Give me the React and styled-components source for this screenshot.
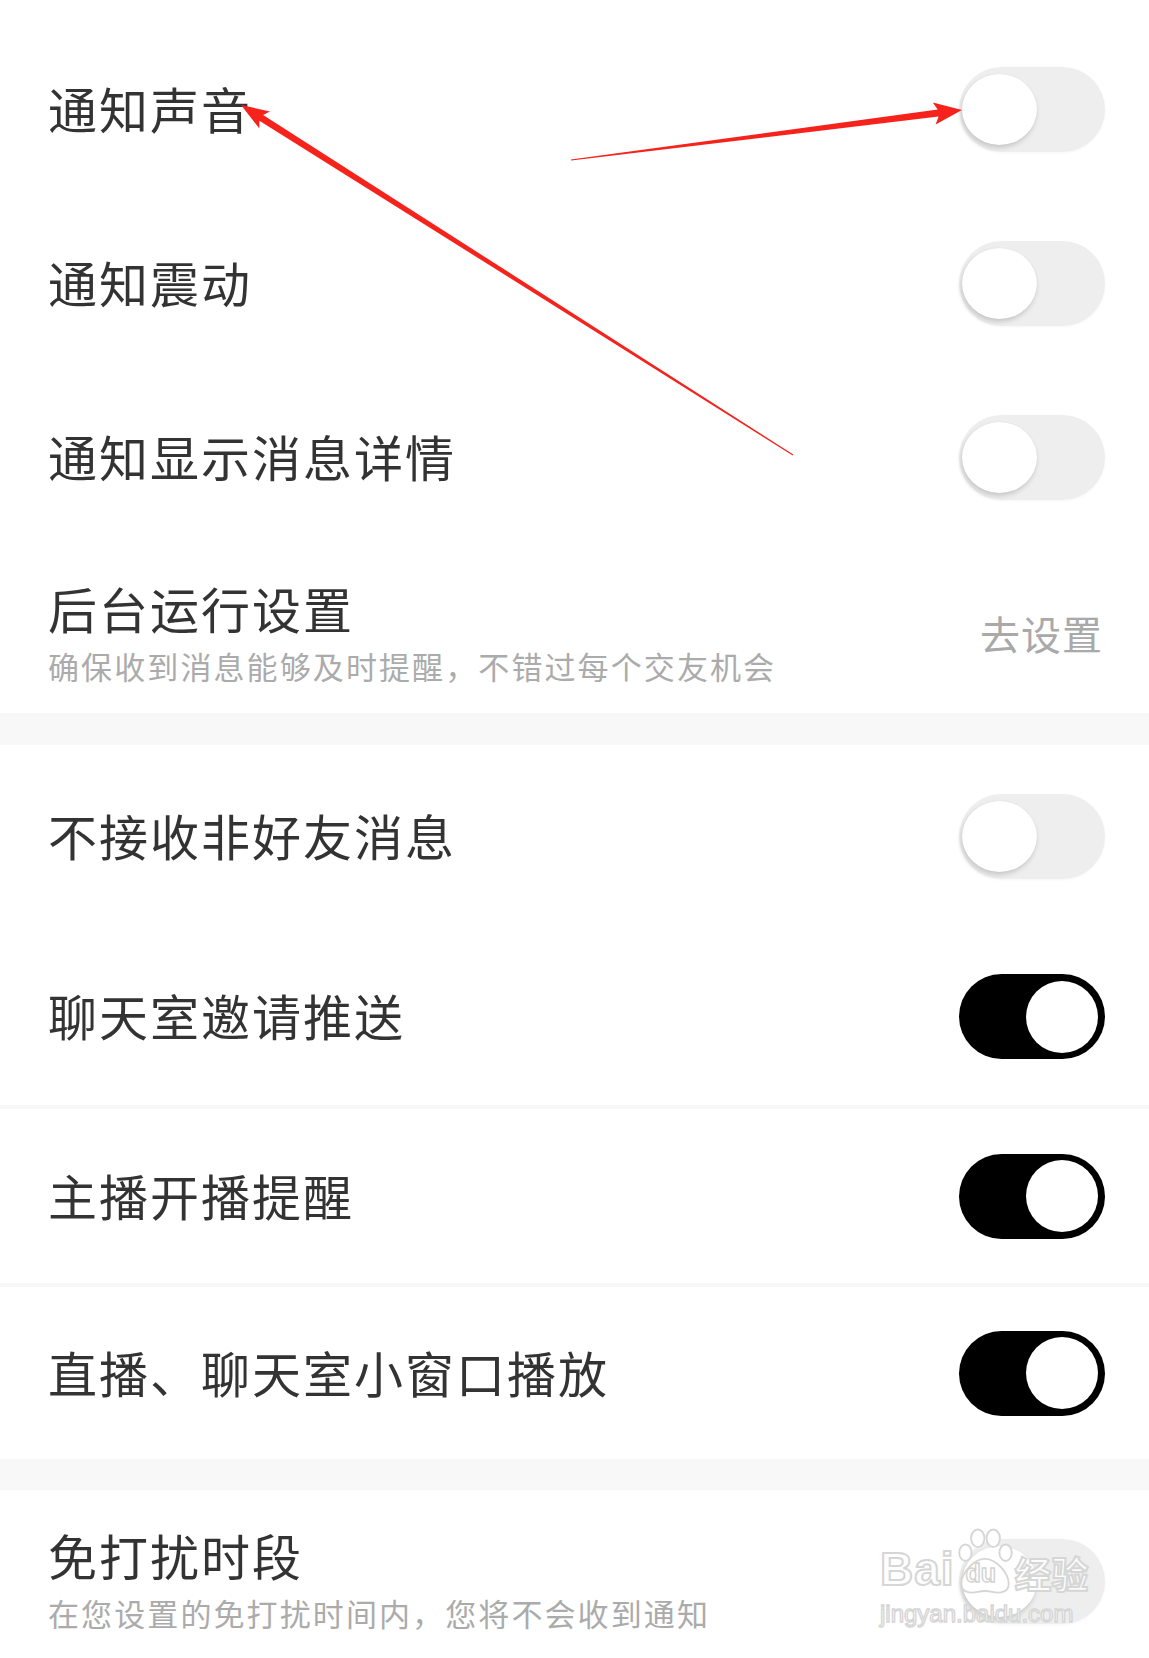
import React from "react";
import styled, { createGlobalStyle } from "styled-components";

const Global = createGlobalStyle`
  html, body {
    margin: 0;
    padding: 0;
    background: #fff;
  }
  body {
    font-family: "Noto Sans CJK SC", "Noto Sans", sans-serif;
  }
`;

const Page = styled.div`
  position: relative;
  width: 1149px;
  height: 1658px;
  overflow: hidden;
  background: #fff;
`;

const Section = styled.div`
  display: flex;
  flex-direction: column;
  padding-top: ${(p) => p.$pt || 0}px;
`;

const Band = styled.div`
  height: ${(p) => p.$h}px;
  background: #f8f8f8;
`;

const Divider = styled.div`
  height: 4px;
  background: #f7f7f7;
`;

const Row = styled.div`
  display: flex;
  align-items: center;
  justify-content: space-between;
  box-sizing: border-box;
  height: ${(p) => p.$h}px;
  padding: ${(p) => p.$pt || 0}px 44px 0 48px;
`;

const TextBlock = styled.div`
  display: flex;
  flex-direction: column;
  gap: 10px;
`;

const Title = styled.div`
  font-size: 49px;
  line-height: 56px;
  letter-spacing: 2px;
  color: #333;
  margin-top: -3px;
`;

const Sub = styled.div`
  font-size: 31px;
  line-height: 40px;
  letter-spacing: 2.1px;
  color: #ababab;
`;

const Action = styled.div`
  font-size: 40px;
  line-height: 48px;
  letter-spacing: 1px;
  color: #a9a9a9;
  margin-right: 2px;
  margin-bottom: 4px;
`;

const Track = styled.div`
  display: flex;
  align-items: center;
  justify-content: ${(p) => (p.$on ? "flex-end" : "flex-start")};
  box-sizing: border-box;
  width: 146px;
  height: 85px;
  border-radius: 43px;
  padding: ${(p) => (p.$on ? "0 7px" : "0 3px")};
  background: ${(p) => (p.$on ? "#000" : "#eeeeee")};
  box-shadow: ${(p) => (p.$on ? "none" : "0 1px 3px rgba(0,0,0,0.04)")};
`;

const Knob = styled.div`
  width: ${(p) => (p.$on ? 72 : 75)}px;
  height: ${(p) => (p.$on ? 72 : 71)}px;
  border-radius: 50%;
  background: #fff;
  box-shadow: ${(p) =>
    p.$on ? "none" : "-1px 3px 5px rgba(0,0,0,0.16), 0 0 1px rgba(0,0,0,0.08)"};
`;

const Overlay = styled.svg`
  position: absolute;
  left: 0;
  top: 0;
  pointer-events: none;
`;

const Watermark = styled.div`
  position: absolute;
  left: 880px;
  top: 1528px;
  width: 214px;
  display: flex;
  flex-direction: column;
  align-items: flex-start;
  pointer-events: none;
`;

const MarkTop = styled.div`
  display: flex;
  align-items: flex-end;
`;

const MarkWord = styled.span`
  font-family: ${(p) => (p.$cjk ? '"Noto Sans CJK SC", sans-serif' : '"Liberation Sans", sans-serif')};
  font-weight: 700;
  font-size: ${(p) => p.$size}px;
  line-height: 1;
  color: rgba(255, 255, 255, 0.85);
  -webkit-text-stroke: 2px #d6d6d6;
  letter-spacing: ${(p) => p.$ls || 0}px;
`;

const Paw = styled.div`
  position: relative;
  width: 56px;
  height: 68px;
  margin: 0 2px -4px;
`;

const PawText = styled.span`
  position: absolute;
  left: 9px;
  bottom: 10px;
  font-family: "Liberation Sans", sans-serif;
  font-weight: 700;
  font-size: 25px;
  line-height: 1;
  color: rgba(255, 255, 255, 0.85);
  -webkit-text-stroke: 1.4px #d2d2d2;
`;

const MarkUrl = styled.span`
  font-family: "Liberation Sans", sans-serif;
  font-size: 24px;
  line-height: 1;
  margin-top: 10px;
  color: rgba(255, 255, 255, 0.85);
  -webkit-text-stroke: 1.4px #d6d6d6;
`;

function Toggle({ on }) {
  return (
    <Track $on={on}>
      <Knob $on={on} />
    </Track>
  );
}

function arrowPoints(tail, tip, w0, w1, headLen, headHalf) {
  const dx = tip[0] - tail[0];
  const dy = tip[1] - tail[1];
  const len = Math.hypot(dx, dy);
  const ux = dx / len;
  const uy = dy / len;
  const nx = -uy;
  const ny = ux;
  const bx = tip[0] - ux * headLen;
  const by = tip[1] - uy * headLen;
  const pts = [
    [tail[0] + (nx * w0) / 2, tail[1] + (ny * w0) / 2],
    [bx + (nx * w1) / 2, by + (ny * w1) / 2],
    [bx + nx * headHalf - ux * 4, by + ny * headHalf - uy * 4],
    tip,
    [bx - nx * headHalf - ux * 4, by - ny * headHalf - uy * 4],
    [bx - (nx * w1) / 2, by - (ny * w1) / 2],
    [tail[0] - (nx * w0) / 2, tail[1] - (ny * w0) / 2],
  ];
  return pts.map((p) => p.map((v) => v.toFixed(1)).join(",")).join(" ");
}

const simpleRows = [
  { label: "通知声音", on: false },
  { label: "通知震动", on: false },
  { label: "通知显示消息详情", on: false },
];

export default function App() {
  return (
    <>
      <Global />
      <Page>
        <Section $pt={22}>
          {simpleRows.map((r) => (
            <Row key={r.label} $h={174}>
              <Title>{r.label}</Title>
              <Toggle on={r.on} />
            </Row>
          ))}
          <Row $h={169} $pt={12}>
            <TextBlock>
              <Title>后台运行设置</Title>
              <Sub>确保收到消息能够及时提醒，不错过每个交友机会</Sub>
            </TextBlock>
            <Action>去设置</Action>
          </Row>
        </Section>

        <Band $h={32} />

        <Section>
          <Row $h={183}>
            <Title>不接收非好友消息</Title>
            <Toggle on={false} />
          </Row>
          <Row $h={177}>
            <Title>聊天室邀请推送</Title>
            <Toggle on />
          </Row>
          <Divider />
          <Row $h={174}>
            <Title>主播开播提醒</Title>
            <Toggle on />
          </Row>
          <Divider />
          <Row $h={172}>
            <Title>直播、聊天室小窗口播放</Title>
            <Toggle on />
          </Row>
        </Section>

        <Band $h={31} />

        <Section>
          <Row $h={182}>
            <TextBlock>
              <Title>免打扰时段</Title>
              <Sub>在您设置的免打扰时间内，您将不会收到通知</Sub>
            </TextBlock>
            <Toggle on={false} />
          </Row>
        </Section>

        <Overlay width="1149" height="1658" viewBox="0 0 1149 1658">
          <polygon
            fill="#f5231c"
            points={arrowPoints([571, 160], [962, 110], 1, 7, 24, 11)}
          />
          <polygon
            fill="#f5231c"
            points={arrowPoints([793, 455], [241, 105], 1, 7, 24, 10)}
          />
        </Overlay>

        <Watermark>
          <MarkTop>
            <MarkWord $size={46} $ls={1}>Bai</MarkWord>
            <Paw>
              <svg width="56" height="68" viewBox="0 0 54 66">
                <g fill="rgba(255,255,255,0.85)" stroke="#d6d6d6" strokeWidth="1.8">
                  <ellipse cx="8" cy="24" rx="6" ry="8" />
                  <ellipse cx="20" cy="10" rx="6.5" ry="8.5" />
                  <ellipse cx="35" cy="10" rx="6.5" ry="8.5" />
                  <ellipse cx="47" cy="24" rx="6" ry="8" />
                  <path d="M27 30 C 16 30, 4 44, 4 54 C 4 62, 12 64, 20 62 C 24 61, 30 61, 34 62 C 42 64, 50 62, 50 54 C 50 44, 38 30, 27 30 Z" />
                </g>
              </svg>
              <PawText>du</PawText>
            </Paw>
            <MarkWord $cjk $size={37}>经验</MarkWord>
          </MarkTop>
          <MarkUrl>jingyan.baidu.com</MarkUrl>
        </Watermark>
      </Page>
    </>
  );
}
